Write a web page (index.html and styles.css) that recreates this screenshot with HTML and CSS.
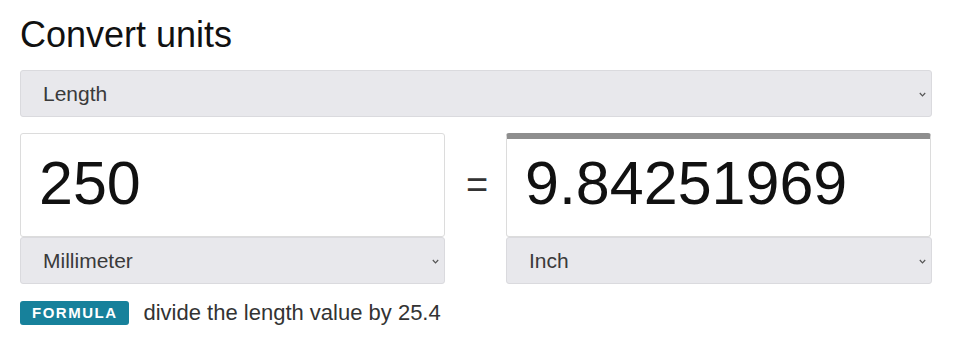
FILE: index.html
```html
<!DOCTYPE html>
<html lang="en">
<head>
<meta charset="utf-8">
<title>Convert units</title>
<link rel="stylesheet" href="styles.css">
</head>
<body>
<main class="page">
  <h1 class="title">Convert units</h1>
  <div class="select select-main">
    <span>Length</span>
    <svg class="chev" width="7" height="5" viewBox="0 0 7 5"><path d="M0.8 1 L3.5 3.8 L6.2 1" fill="none" stroke="#555" stroke-width="1.2"/></svg>
  </div>
  <div class="converter">
    <div class="side">
      <div class="value">250</div>
      <div class="select">
        <span>Millimeter</span>
        <svg class="chev" width="7" height="5" viewBox="0 0 7 5"><path d="M0.8 1 L3.5 3.8 L6.2 1" fill="none" stroke="#555" stroke-width="1.2"/></svg>
      </div>
    </div>
    <div class="equals">=</div>
    <div class="side">
      <div class="value value-result">9.84251969</div>
      <div class="select">
        <span>Inch</span>
        <svg class="chev" width="7" height="5" viewBox="0 0 7 5"><path d="M0.8 1 L3.5 3.8 L6.2 1" fill="none" stroke="#555" stroke-width="1.2"/></svg>
      </div>
    </div>
  </div>
  <div class="formula">
    <span class="badge">FORMULA</span>
    <span class="formula-text">divide the length value by 25.4</span>
  </div>
</main>
</body>
</html>
```

FILE: styles.css
```css
html, body {
  margin: 0;
  padding: 0;
  background: #ffffff;
}

body {
  font-family: "Liberation Sans", Arial, sans-serif;
  color: #333;
}

.page {
  width: 912px;
  padding: 13px 24px 0 20px;
}

.title {
  margin: 0;
  font-size: 36px;
  line-height: 43px;
  font-weight: 400;
  color: #111;
}

.select {
  height: 47px;
  box-sizing: border-box;
  display: flex;
  align-items: center;
  justify-content: space-between;
  padding: 1px 5px 0 22px;
  background: #e8e8ec;
  border: 1px solid #dadade;
  border-radius: 3px;
  font-size: 21px;
  color: #3a3a3a;
}

.select-main {
  margin-top: 14px;
}

.chev {
  display: block;
  margin-top: 1px;
}

.converter {
  margin-top: 16px;
  display: grid;
  grid-template-columns: 425px 61px 426px;
  align-items: start;
}

.side {
  display: flex;
  flex-direction: column;
}

.value {
  height: 104px;
  box-sizing: border-box;
  border: 1px solid #dcdcdc;
  border-radius: 3px;
  padding: 15px 18px 0 18px;
  font-size: 61px;
  line-height: 68px;
  color: #111;
  background: #fff;
}

.value-result {
  border-top: 6px solid #8e8e8e;
  padding-top: 10px;
  width: 425px;
}

.equals {
  height: 104px;
  display: flex;
  align-items: center;
  justify-content: center;
  font-size: 38px;
  color: #333;
  padding-left: 3px;
}

.formula {
  margin-top: 16px;
  display: flex;
  align-items: center;
}

.badge {
  display: inline-block;
  height: 24px;
  line-height: 24px;
  padding: 0 11px 0 12px;
  background: #17819b;
  color: #fff;
  font-weight: 700;
  font-size: 15px;
  letter-spacing: 1.5px;
  border-radius: 3px;
}

.formula-text {
  margin-left: 15px;
  font-size: 22px;
  color: #333;
}
```
